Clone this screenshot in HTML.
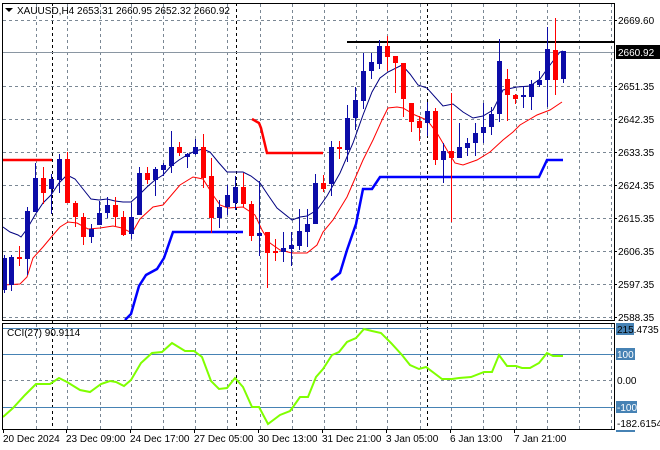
<!DOCTYPE html>
<html><head><meta charset="utf-8"><style>
html,body{margin:0;padding:0;background:#fff;width:660px;height:450px;overflow:hidden}
svg{display:block}
text{font-family:"Liberation Sans",sans-serif;font-size:10px;fill:#000}
</style></head><body>
<svg id="s" width="660" height="450" xmlns="http://www.w3.org/2000/svg">
<rect width="660" height="450" fill="#fff"/>
<g id="grid" stroke="#7a8794" stroke-width="1" stroke-dasharray="3,3" fill="none"></g>
<g stroke="#000" stroke-dasharray="3,3" stroke-width="1">
<line x1="52.5" y1="3" x2="52.5" y2="429"/><line x1="236.5" y1="3" x2="236.5" y2="429"/><line x1="427.5" y1="3" x2="427.5" y2="429"/>
</g>
<line x1="3" y1="52.5" x2="614" y2="52.5" stroke="#8a96a2"/>
<line x1="347" y1="42" x2="614" y2="42" stroke="#000" stroke-width="2"/>
<g stroke="#4682b4" stroke-width="1"><line x1="3" y1="328.5" x2="614" y2="328.5"/><line x1="3" y1="354.5" x2="614" y2="354.5"/><line x1="3" y1="407.5" x2="614" y2="407.5"/></g>
<polyline fill="none" stroke="#f00" stroke-width="2.5" points="3,160 52,160"/>
<polyline fill="none" stroke="#f00" stroke-width="2.5" points="252,119 259,123 261,128 267,153 323,153"/>
<polyline fill="none" stroke="#0000ff" stroke-width="2.5" points="125,320 131,314 139,286 146,275 157,269 164,258 173,232 243,232"/>
<polyline fill="none" stroke="#0000ff" stroke-width="2.5" points="331,280 340,273 347,250 356,224 363,189 372,189 380,177 539,177 547,160 563,160"/>
<polyline fill="none" stroke="#000080" stroke-width="1" points="3,227 10,232 18,235 21,237 27,229 35,215 43,203 51,195 59,183 67,175 75,179 83,189 91,199 99,200 107,199 115,201 123,202 131,202 139,195 147,187 155,180 163,175 171,166 179,160 187,155 195,151 203,149 210,152 219,163 227,172 243,172 251,176 260,183 268,195 277,208 292,220 300,217 307,216 317,210 327,196 340,173 353,143 363,115 372,92 380,78 388,72 402,65 410,74 418,85 427,88 443,106 453,104 463,112 473,118 483,116 493,110 503,90 517,87 530,86 540,79 550,65 560,52 563,51"/>
<polyline fill="none" stroke="#f00" stroke-width="1" points="3,285 20,284 27,277 33,258 43,247 53,235 60,227 68,222 77,223 88,229 100,228 113,226 122,228 132,233 140,219 153,207 163,205 180,185 193,177 203,179 213,195 220,205 228,208 243,207 255,215 262,230 270,243 280,250 292,253 307,253 317,245 323,232 333,220 347,197 363,160 373,140 382,120 388,108 397,107 403,108 415,115 427,120 437,133 447,150 455,163 463,165 477,160 490,152 503,140 513,132 520,125 537,115 550,110 562,102"/>
<g id="c"></g>
<polyline fill="none" stroke="#7fff00" stroke-width="2" points="3,417 13,408 25,395 36,384 50,384 59,378 67,382 80,390 90,392 101,384 110,381 116,382 124,386 131,380 141,363 152,353 162,352 172,343 185,351 194,351 202,357 211,381 219,389 227,388 235,378 243,387 252,407 259,407 268,424 280,415 290,411 293,407 300,397 308,397 316,377 323,369 332,355 339,352 347,342 356,338 364,329 372,331 381,333 391,343 402,355 410,365 419,369 426,367 442,379 452,379 459,378 471,377 484,372 492,372 499,355 507,366 516,366 522,368 530,368 539,363 547,353 553,356 563,356"/>
<g fill="none" stroke="#000" stroke-width="1">
<rect x="2.5" y="3.5" width="612" height="317"/>
<rect x="2.5" y="323.5" width="612" height="106"/>
</g>
<polygon points="5,8 13,8 9,12" fill="#000"/>
<text x="17" y="14">XAUUSD,H4  2653.31 2660.95 2652.32 2660.92</text>
<text x="7" y="336">CCI(27) 90.9114</text>
<g id="ax"></g>
<rect x="616" y="45" width="44" height="14" fill="#000"/>
<text x="618" y="56" style="fill:#fff">2660.92</text>
<rect x="616" y="323" width="18" height="12" fill="#4682b4"/>
<text x="617" y="333">215.4735</text>
<rect x="616" y="348" width="19" height="12" fill="#4682b4"/>
<text x="617" y="358" style="fill:#fff">100</text>
<text x="617" y="384">0.00</text>
<rect x="616" y="401" width="21" height="12" fill="#4682b4"/>
<text x="617" y="411" style="fill:#fff">-100</text>
<text x="617" y="427">-182.6154</text>
<line x1="616" y1="431" x2="635" y2="431" stroke="#4682b4" stroke-width="2"/>
</svg>
<script>
var ns="http://www.w3.org/2000/svg",s=document.getElementById('s');
function el(p,t,a){var e=document.createElementNS(ns,t);for(var k in a)e.setAttribute(k,a[k]);p.appendChild(e);return e;}
var g=document.getElementById('grid');
[36,67,100,131,163,195,227,260,292,324,356,387,420,451,483,516,547,579,611].forEach(function(x){el(g,'line',{x1:x+.5,y1:4,x2:x+.5,y2:320});el(g,'line',{x1:x+.5,y1:324,x2:x+.5,y2:429});});
[20,86,119,152,185,218,251,284,317,380].forEach(function(y){el(g,'line',{x1:3,y1:y+.5,x2:614,y2:y+.5});});
var ax=document.getElementById('ax');
[["2669.60",20],["2651.35",86],["2642.35",119],["2633.35",152],["2624.35",185],["2615.35",218],["2606.35",251],["2597.35",284],["2588.35",317]].forEach(function(l){var t=el(ax,'text',{x:618,y:l[1]+4});t.textContent=l[0];el(ax,'line',{x1:614,y1:l[1]+.5,x2:617,y2:l[1]+.5,stroke:'#000'});});
[["20 Dec 2024",3],["23 Dec 09:00",66],["24 Dec 17:00",130],["27 Dec 05:00",194],["30 Dec 13:00",258],["31 Dec 21:00",322],["3 Jan 05:00",386],["6 Jan 13:00",450],["7 Jan 21:00",514]].forEach(function(l){var t=el(ax,'text',{x:l[1],y:442});t.textContent=l[0];el(ax,'line',{x1:l[1]+.5,y1:429,x2:l[1]+.5,y2:433,stroke:'#000'});});
var B='#0c0ca8',R='#ff0000';
var d=[[258,290,255,293,B],[257,285,255,291,B],[257,259,246,266,R],[211,259,207,275,B],[178,212,163,212,B],[178,193,167,204,R],[179,189,174,214,B],[159,180,154,193,B],[159,203,152,203,R],[203,217,201,227,R],[217,237,213,245,R],[229,237,224,243,B],[213,225,201,225,B],[205,213,197,218,B],[205,217,197,226,R],[217,235,211,236,R],[217,234,203,239,B],[173,215,167,215,B],[173,180,167,184,R],[169,180,167,196,B],[165,170,163,176,B],[147,166,131,173,B],[147,153,142,156,R],[154,157,153,168,B],[147,154,139,155,B],[147,178,134,188,R],[176,218,158,233,R],[207,218,200,228,B],[195,207,185,215,B],[187,203,176,210,B],[187,204,173,207,R],[204,236,201,241,R],[233,236,181,256,B],[232,253,232,288,R],[251,253,239,261,R],[248,252,232,262,B],[245,249,232,266,B],[231,246,209,250,B],[224,232,209,247,B],[183,224,174,224,B],[183,189,175,192,R],[147,184,141,196,B],[147,149,141,159,R],[118,150,105,162,B],[100,118,87,130,B],[71,101,53,109,B],[62,71,53,79,B],[46,64,40,69,B],[46,57,36,71,R],[56,63,56,93,R],[63,99,63,117,R],[103,122,103,132,R],[121,128,116,141,R],[111,123,102,136,B],[111,160,108,165,R],[151,160,143,183,B],[151,158,93,222,R],[147,158,123,158,B],[143,148,138,156,B],[133,143,123,156,B],[127,133,103,143,B],[114,127,107,135,B],[61,114,39,122,B],[79,95,69,121,R],[95,99,94,104,R],[95,97,86,108,B],[84,97,80,110,B],[80,85,71,87,B],[49,80,27,107,B],[50,80,18,95,R],[51,79,51,83,B]];
var cg=document.getElementById('c');
d.forEach(function(c,k){var x=3+8*k;if(k==0)x=4;el(cg,'rect',{x:x,y:c[2],width:1,height:c[3]-c[2],fill:c[4]});el(cg,'rect',{x:x-2,y:c[0],width:5,height:Math.max(2,c[1]-c[0]),fill:c[4]});});
</script>
</body></html>
